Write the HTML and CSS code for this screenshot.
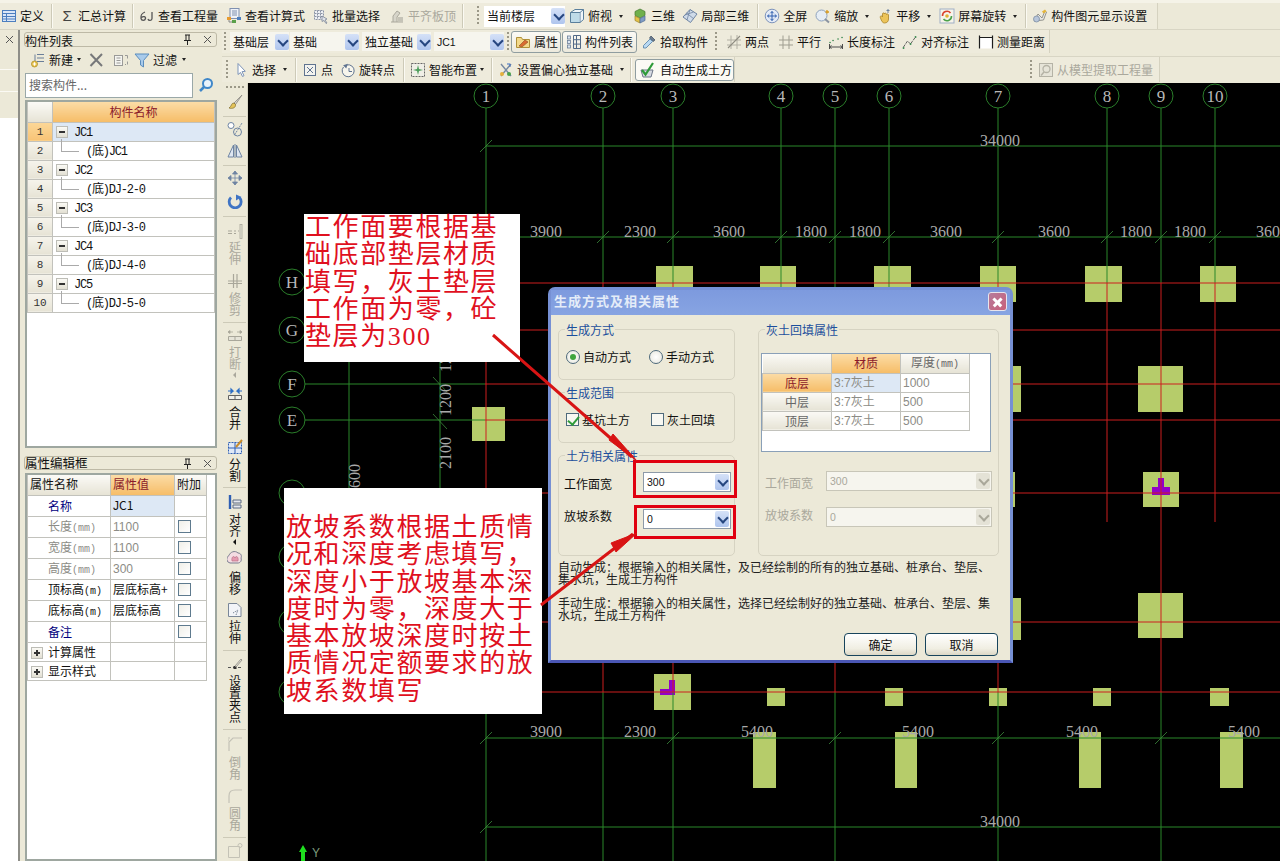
FILE: index.html
```html
<!DOCTYPE html>
<html lang="zh-CN">
<head>
<meta charset="utf-8">
<title>生成方式及相关属性</title>
<link rel="stylesheet" href="styles.css">
</head>
<body>
<svg class="defs" aria-hidden="true">
  <symbol id="i-table" viewBox="0 0 16 16"><rect x="1.5" y="2.5" width="13" height="11" fill="#dbe7f7" stroke="#4d7fbf"/><path d="M1.5 5.5h13M5.5 5.5v8M1.5 8.5h13M1.5 11h13" stroke="#4d7fbf" fill="none"/></symbol>
  <symbol id="i-six" viewBox="0 0 16 16"><path d="M6 4C3 5 1.500 8 2 10.500 2.500 13 6 13 6.500 10.500 7 8.500 4 8 2.500 9.500M13 4v6.500c0 2.500-3.500 2.500-4 .5" fill="none" stroke="#555" stroke-width="1.300"/></symbol>
  <symbol id="i-doc" viewBox="0 0 16 16"><rect x="4" y="0.500" width="9" height="10" fill="#eef1f7" stroke="#7f90b0"/><path d="M6 3h5M6 5h5M6 7h5" stroke="#7f90b0"/><rect x="1" y="9" width="4" height="3" fill="#e89b2f"/><rect x="6" y="12" width="4" height="3" fill="#5aa04a"/><rect x="11" y="9" width="4" height="3" fill="#4d7fbf"/><path d="M3 12v2h3" stroke="#888" fill="none"/></symbol>
  <symbol id="i-batch" viewBox="0 0 16 16"><path d="M1.500 2.500h9v9h-9zM4.500 2.500v9M7.500 2.500v9M1.500 5.500h9M1.500 8.500h9" fill="#eef0f4" stroke="#8a93a5" stroke-dasharray="2 1"/><path d="M9 8l5 3-2 1 2 3-1 .5-2-3-2 1z" fill="#dfe3ea" stroke="#707a8c" stroke-width=".7"/></symbol>
  <symbol id="i-flat" viewBox="0 0 16 16"><path d="M2 14h12M4 14V8l4-5 3 2-3 4v5" fill="#d7d5ca" stroke="#aaa89c"/><rect x="9" y="9" width="5" height="5" fill="#c5c3b7"/></symbol>
  <symbol id="i-cube" viewBox="0 0 16 16"><path d="M1.500 4.500 6 1.500h8.500v10L11 14.500H1.500z" fill="#f0f6fa" stroke="#5a7f9c"/><path d="M1.500 4.500H11v10M11 4.500l3.500-3" fill="none" stroke="#5a7f9c"/><path d="M2 5h8.500v9H2z" fill="#bfdbe8"/></symbol>
  <symbol id="i-3d" viewBox="0 0 16 16"><path d="M8 1l5 2.500v4L8 10 3 7.500v-4z" fill="#6fb04c" stroke="#44772f" stroke-width=".7"/><path d="M3 8l5 2.500V15l-5-2.500z" fill="#e4c24a" stroke="#9b8226" stroke-width=".7"/><path d="M13 8v4.500L8 15v-4.500z" fill="#7f9cc4" stroke="#4c6a94" stroke-width=".7"/></symbol>
  <symbol id="i-part3d" viewBox="0 0 16 16"><path d="M8 1.500 15 6l-6.500 8.500L1 9z" fill="#cfdbe9" stroke="#6e84a2"/><path d="M4.500 5 12 11M8 1.500 5 12M11.500 4 3 7" stroke="#6e84a2" stroke-width=".8" fill="none"/></symbol>
  <symbol id="i-full" viewBox="0 0 16 16"><circle cx="8" cy="8" r="6.800" fill="#e4ebf6" stroke="#7d93bb"/><path d="M8 3.500v9M3.500 8h9M8 3.500 6.500 5.200M8 3.500l1.500 1.700M8 12.500l-1.500-1.700M8 12.500l1.500-1.700M3.500 8l1.700-1.500M3.500 8l1.700 1.500M12.500 8l-1.700-1.500M12.500 8l-1.700 1.500" stroke="#2f5fae" fill="none"/></symbol>
  <symbol id="i-zoom" viewBox="0 0 16 16"><circle cx="6.500" cy="7.500" r="5.500" fill="#e6edf5" stroke="#8ea2bd"/><path d="M10 11l4 3.500" stroke="#8a93a0" stroke-width="2"/><path d="M12 2v3.500M10.500 4H14" stroke="#d89a1f" stroke-width="1.300"/></symbol>
  <symbol id="i-pan" viewBox="0 0 16 16"><path d="M3.500 10c-1-2 1-3 2-1V6c0-1.500 2-1.500 2 0 0-1.500 2-1 2 .5 0-1 2-.7 2 .5V11c0 2.500-1.500 4-4 4-2 0-3-2-4-5z" fill="#ecc45a" stroke="#a9842a" stroke-width=".8"/><path d="M11 1v4M9.500 2.500h3" stroke="#6e84a2"/></symbol>
  <symbol id="i-rot" viewBox="0 0 16 16"><rect x="1" y="1" width="14" height="14" fill="#f7f4ea" stroke="#9fb0c6"/><path d="M3.500 8a4.500 4.500 0 0 1 8-3" fill="none" stroke="#d9432e" stroke-width="1.600"/><path d="M12.500 8a4.500 4.500 0 0 1-8 3" fill="none" stroke="#4aa24a" stroke-width="1.600"/><circle cx="8" cy="8" r="1.800" fill="#e3b132"/></symbol>
  <symbol id="i-disp" viewBox="0 0 16 16"><path d="M2 13l4-7 4 4 3-7 1.500 1-3 8z" fill="#e8e8e4" stroke="#8a8a84" stroke-width=".9"/><circle cx="4.500" cy="11" r="3" fill="#b8c6da" stroke="#73859e" stroke-width=".7"/><path d="M10 3.500l3-2 1.500 2-3 2z" fill="#e5b63a"/></symbol>
  <symbol id="i-prop" viewBox="0 0 16 16"><path d="M1.500 3.500h5l1 2h7v8h-13z" fill="#f3d98a" stroke="#b09039"/><path d="M4 12l6-6 3 2-6 5z" fill="#d96b30" stroke="#8c4a26" stroke-width=".6"/></symbol>
  <symbol id="i-list" viewBox="0 0 16 16"><rect x="1.500" y="2" width="3" height="3" fill="#dbe5f1" stroke="#6b7f99" stroke-width=".8"/><rect x="1.500" y="6.500" width="3" height="3" fill="#dbe5f1" stroke="#6b7f99" stroke-width=".8"/><rect x="1.500" y="11" width="3" height="3" fill="#dbe5f1" stroke="#6b7f99" stroke-width=".8"/><path d="M7.500 1.500h7v13h-7zM7.500 5.700h7M7.500 10.100h7M10.500 1.500v13" fill="none" stroke="#536a88"/></symbol>
  <symbol id="i-pick" viewBox="0 0 16 16"><path d="M10 2l4 4-2 1.500L8.500 4z" fill="#6c7d92" stroke="#3c4a5c" stroke-width=".7"/><path d="M9 5l2.500 2.500L5 14H2.500v-2.500z" fill="#b9d9f2" stroke="#5f89ad" stroke-width=".9"/></symbol>
  <symbol id="i-two" viewBox="0 0 16 16"><path d="M5 1.500V15M11 1v14M1 6h14M1 11h14" stroke="#b2b0a4" fill="none"/><path d="M2 14 14 2" stroke="#8f8d82" stroke-width="1.100"/></symbol>
  <symbol id="i-par" viewBox="0 0 16 16"><path d="M5 1.500V15M11 1.500V15M1 6h14M1 11h14" stroke="#9f9d90" fill="none"/></symbol>
  <symbol id="i-len" viewBox="0 0 16 16"><path d="M1.500 15v-5M14.500 15v-5M1.500 13h13M1.500 13l2-1.500M1.500 13l2 1.500M14.500 13l-2-1.500M14.500 13l-2 1.500" stroke="#4c4c4c" fill="none"/><path d="M2 8.500h.1M5 6.500h.1M10 5h.1M14 3.500h.1" stroke="#3d8a52" stroke-width="1.600" stroke-linecap="round"/></symbol>
  <symbol id="i-align" viewBox="0 0 16 16"><path d="M1.500 13l4-6 3 3 5-7" stroke="#616161" fill="none" stroke-dasharray="3 1"/><path d="M1.500 14h.1M8.500 10h.1M13.500 3h.1" stroke="#3d8a52" stroke-width="1.800" stroke-linecap="round"/></symbol>
  <symbol id="i-meas" viewBox="0 0 16 16"><rect x="1.500" y="3.500" width="13" height="11" fill="#fff"/><path d="M1.500 1.500v13M14.500 1.500v13M1.500 3.500h13" stroke="#1d1d1d" fill="none" stroke-width="1.200"/></symbol>
  <symbol id="i-sel" viewBox="0 0 16 16"><path d="M5 1.500v11l2.500-2 2 4 1.500-.8-2-4 3.300-.4z" fill="#fff" stroke="#7d94b8"/></symbol>
  <symbol id="i-dot" viewBox="0 0 16 16"><rect x="2.500" y="2.500" width="11" height="11" fill="#f3f3ef" stroke="#5f7390"/><path d="M5 5l6 6M11 5l-6 6" stroke="#5f7390"/></symbol>
  <symbol id="i-rotpt" viewBox="0 0 16 16"><path d="M3.500 5a6 6 0 1 0 3-2" fill="#f7f5ec" stroke="#5f7390"/><path d="M7 1v5L3 4z" fill="#5f7390" transform="rotate(20 5 4)"/><path d="M9 6v3.500h3" stroke="#5f7390" fill="none"/></symbol>
  <symbol id="i-smart" viewBox="0 0 16 16"><rect x="1.500" y="1.500" width="13" height="13" fill="#f0efe7" stroke="#666" stroke-dasharray="2 1"/><path d="M8 3l1 4 4 1-4 1-1 4-1-4-4-1 4-1z" fill="#4e9e5c"/></symbol>
  <symbol id="i-ecc" viewBox="0 0 16 16"><path d="M3 2l10 12M13 2 3 14" stroke="#7689a3" stroke-width="1.400"/><circle cx="4" cy="12" r="2" fill="#e6b13b"/><circle cx="11" cy="12" r="2" fill="#4aa24a"/><path d="M9 2h3v3" stroke="#3f6fbf" fill="none"/></symbol>
  <symbol id="i-auto" viewBox="0 0 16 16"><path d="M2 8h12l-2 7H4z" fill="#d7dbe3" stroke="#6c7688"/><path d="M3 8l3.500 4.500L14 1" fill="none" stroke="#2f9b3a" stroke-width="2.200"/></symbol>
  <symbol id="i-fromm" viewBox="0 0 16 16"><rect x="1.500" y="1.500" width="13" height="13" fill="#e6e4d8" stroke="#b5b3a6"/><circle cx="8.500" cy="7" r="3.500" fill="none" stroke="#b5b3a6" stroke-width="1.300"/><path d="M6 10l-3 3.500" stroke="#b5b3a6" stroke-width="1.500"/></symbol>
  <symbol id="i-new" viewBox="0 0 16 16"><path d="M7 2.500h7M7 6h7M7 9.500h7" stroke="#6a7e99"/><path d="M5 2.500v7" stroke="#6a7e99"/><circle cx="4.500" cy="12" r="3" fill="#e9c54e" stroke="#b08f2a" stroke-width=".8"/><path d="M2.800 12h3.400M4.500 10.300v3.400" stroke="#fff"/></symbol>
  <symbol id="i-x" viewBox="0 0 16 16"><path d="M2.500 2 14 14M14 2 2.500 14" stroke="#77787a" stroke-width="2"/></symbol>
  <symbol id="i-copy" viewBox="0 0 16 16"><rect x="1.500" y="3.500" width="8" height="10" fill="#f4f4f0" stroke="#9a9a98"/><path d="M3.500 6h4M3.500 8.500h4M3.500 11h4" stroke="#9a9a98"/><path d="M12 3.500h2.500v3M14.500 9.500v3M12 12.500h1" stroke="#9a9a98" fill="none"/></symbol>
  <symbol id="i-filter" viewBox="0 0 16 16"><path d="M1 2h14L9.500 8.500V15l-3-2V8.500z" fill="#a9cbeb" stroke="#5b8dbd"/></symbol>
  <symbol id="i-search" viewBox="0 0 16 16"><circle cx="9.500" cy="6.500" r="4.500" fill="#eaf3fb" stroke="#3f87c9" stroke-width="2"/><path d="M6 10l-4 4" stroke="#3f87c9" stroke-width="2.500"/></symbol>
  <symbol id="i-pin" viewBox="0 0 9 11"><path d="M2 1h5M3 1v5M6 1v5M1 6.500h7M4.500 7v4" stroke="#222" fill="none"/></symbol>
  <symbol id="i-close" viewBox="0 0 9 9"><path d="M1 1l7 7M8 1 1 8" stroke="#555" fill="none"/></symbol>
  <symbol id="i-brush" viewBox="0 0 16 16"><path d="M15 1 7 9l1.500 1.500z" fill="#d5d3cc" stroke="#8a8882" stroke-width=".8"/><path d="M7 9c-3 0-2 3-5 5 3 1 7 0 6.500-3.500z" fill="#e3c35a" stroke="#7c6a2a" stroke-width=".7"/></symbol>
  <symbol id="i-circ" viewBox="0 0 16 16"><circle cx="4" cy="4.500" r="3" fill="#fff" stroke="#6e84a2"/><circle cx="10.500" cy="11" r="4" fill="none" stroke="#6e84a2"/><path d="M7.500 14 15 2" stroke="#6e84a2" stroke-dasharray="2 1"/></symbol>
  <symbol id="i-mirror" viewBox="0 0 16 16"><path d="M1 14 6.500 2v12zM15 14 9.500 2v12z" fill="#dee6f1" stroke="#6e84a2"/><path d="M8 1v14" stroke="#6e84a2"/></symbol>
  <symbol id="i-move" viewBox="0 0 16 16"><path d="M8 1v14M1 8h14M8 1 5.500 4h5zM8 15l-2.500-3h5zM1 8l3-2.500v5zM15 8l-3-2.500v5z" fill="#6e84a2" stroke="#6e84a2" stroke-width=".8"/></symbol>
  <symbol id="i-rotate" viewBox="0 0 16 16"><path d="M4 4.500a6 6 0 1 0 8.300 0" fill="none" stroke="#3f74c4" stroke-width="2.800"/><path d="M9 1.500v6L14.500 4z" fill="#3f74c4"/></symbol>
  <symbol id="i-ext" viewBox="0 0 16 16"><path d="M1 8h4M7 8h2M11 8h1M1 10.500h4M7 10.500h2" stroke="#a9a79a"/><rect x="13" y="1.500" width="2" height="14" fill="#e6e4d8" stroke="#a9a79a" stroke-width=".8"/></symbol>
  <symbol id="i-trim" viewBox="0 0 16 16"><path d="M1 8h14M1 10.500h14" stroke="#a9a79a"/><path d="M6.500 1v14M10 1v14" stroke="#a9a79a" stroke-width="1.200"/></symbol>
  <symbol id="i-break" viewBox="0 0 16 16"><path d="M1 5h5M10 5h5M1 5l2-1.500v3zM15 5l-2-1.500v3z" stroke="#a9a79a" fill="#a9a79a" stroke-width=".8"/><path d="M1.500 9.500h13v4h-13zM8 9.500v4" stroke="#a9a79a" fill="#e6e4d8"/></symbol>
  <symbol id="i-merge" viewBox="0 0 16 16"><path d="M1 5h5L4 3v4l2-2M15 5h-5l2-2v4l-2-2" stroke="#2f6fc4" fill="none" stroke-width="1.200"/><path d="M1.500 9.500h13v4h-13zM8 9.500v4" stroke="#626262" fill="#f2f1ea"/></symbol>
  <symbol id="i-split" viewBox="0 0 16 16"><path d="M1.500 3.500h13v11h-13z" fill="#dfe8f6" stroke="#2f5fb4" stroke-dasharray="2 1"/><path d="M1.500 9h13M8 3.500v11" stroke="#2f5fb4"/><path d="M15 1 9 8" stroke="#c98c2b" stroke-width="2"/></symbol>
  <symbol id="i-aln" viewBox="0 0 16 16"><path d="M3 1v14" stroke="#2f5fb4" stroke-width="2.400"/><path d="M6 6h8v3H6zM6 11h8v3H6z" fill="#e6e8ee" stroke="#5c6b82"/></symbol>
  <symbol id="i-off" viewBox="0 0 16 16"><path d="M3 13a4 4 0 0 1-1-7.500C3 2 8 0 11 3c3 0 4 3 3 5 1 3-1 5-3 5z" fill="#f4dce2" stroke="#7a7f8f"/><path d="M5 11c-1-4 2-6 3-3 1-3 4-1 3 3z" fill="#e59ab0" stroke="#b46a80" stroke-width=".6"/></symbol>
  <symbol id="i-stretch" viewBox="0 0 16 16"><path d="M1.500 1.500H10l4 4v9H1.500z" fill="#f2f4f8" stroke="#7a8798"/><path d="M6 11l5-3M9 13l2-5" stroke="#7a8798" stroke-dasharray="1.500 1"/></symbol>
  <symbol id="i-grips" viewBox="0 0 16 16"><path d="M1 9.500h14" stroke="#555" stroke-dasharray="3 2"/><rect x="6.500" y="8" width="3" height="3" fill="#333"/><path d="M8 8l6-7 1 1-6 7" fill="#e6e4d8" stroke="#8a8882" stroke-width=".8"/></symbol>
  <symbol id="i-cham" viewBox="0 0 16 16"><path d="M2 15V6l4-4h9" fill="none" stroke="#c4c2b6" stroke-width="1.200"/><path d="M1 2h2M1 4h1" stroke="#c4c2b6"/></symbol>
  <symbol id="i-round" viewBox="0 0 16 16"><path d="M2 15V8c0-4 2-6 6-6h7" fill="none" stroke="#c4c2b6" stroke-width="1.200"/></symbol>
  <symbol id="i-last" viewBox="0 0 16 16"><path d="M1.500 3.500h11v11h-11z" fill="none" stroke="#c4c2b6"/><circle cx="13" cy="2.500" r="2" fill="none" stroke="#c4c2b6"/></symbol>
</svg>

<div class="app">
  <header class="tb tb-main">
    <div class="band band-main">
      <span class="ti m1"><svg class="ic"><use href="#i-table"/></svg>定义</span>
      <span class="sep m7"></span>
      <span class="ti m6"><span class="ic sigma">Σ</span>汇总计算</span>
      <span class="sep m6"></span>
      <span class="ti m5"><svg class="ic"><use href="#i-six"/></svg>查看工程量</span>
      <span class="ti m8"><svg class="ic"><use href="#i-doc"/></svg>查看计算式</span>
      <span class="ti m8"><svg class="ic"><use href="#i-batch"/></svg>批量选择</span>
      <span class="ti m9 off"><svg class="ic"><use href="#i-flat"/></svg>平齐板顶</span>
      <span class="sep m6"></span>
      <span class="grip m13"></span>
      <span class="combo plain m5 w81"><span class="combo-text">当前楼层</span><span class="arrow"></span></span>
      <span class="ti m4"><svg class="ic"><use href="#i-cube"/></svg>俯视</span><span class="caret m7"></span>
      <span class="ti m9"><svg class="ic"><use href="#i-3d"/></svg>三维</span>
      <span class="ti m7"><svg class="ic"><use href="#i-part3d"/></svg>局部三维</span>
      <span class="sep m8"></span>
      <span class="ti m5"><svg class="ic"><use href="#i-full"/></svg>全屏</span>
      <span class="ti m8"><svg class="ic"><use href="#i-zoom"/></svg>缩放</span><span class="caret m7"></span>
      <span class="ti m8"><svg class="ic"><use href="#i-pan"/></svg>平移</span><span class="caret m7"></span>
      <span class="ti m8"><svg class="ic"><use href="#i-rot"/></svg>屏幕旋转</span><span class="caret m7"></span>
      <span class="sep m8"></span>
      <span class="ti m5"><svg class="ic"><use href="#i-disp"/></svg>构件图元显示设置</span>
    </div>
  </header>

  <div class="main">
    <aside class="stub">
      <div class="stub-tab"><svg class="mini"><use href="#i-close"/></svg></div>
      <div class="stub-top"></div>
      <div class="stub-body"></div>
    </aside>

    <aside class="panels">
      <div class="panel-head"><span class="panel-title">构件列表</span><svg class="mini pin"><use href="#i-pin"/></svg><svg class="mini"><use href="#i-close"/></svg></div>
      <div class="panel-tools">
        <span class="ti"><svg class="ic"><use href="#i-new"/></svg>新建</span><span class="caret m4"></span>
        <svg class="ic m7"><use href="#i-x"/></svg>
        <svg class="ic m9"><use href="#i-copy"/></svg>
        <span class="ti m5"><svg class="ic"><use href="#i-filter"/></svg>过滤</span><span class="caret m5"></span>
      </div>
      <div class="search">
        <span class="search-input">搜索构件...</span>
        <svg class="ic search-ic"><use href="#i-search"/></svg>
      </div>
      <div class="gridbox list-box">
        <table class="grid list">
          <colgroup><col class="c-num"><col class="c-name"></colgroup>
          <thead><tr><th class="th-plain"></th><th class="th-hot">构件名称</th></tr></thead>
          <tbody>
            <tr class="row-on"><td class="num hot">1</td><td class="parent"><i class="box minus"></i>JC1</td></tr>
            <tr><td class="num">2</td><td class="child">(底)JC1</td></tr>
            <tr><td class="num">3</td><td class="parent"><i class="box minus"></i>JC2</td></tr>
            <tr><td class="num">4</td><td class="child">(底)DJ-2-0</td></tr>
            <tr><td class="num">5</td><td class="parent"><i class="box minus"></i>JC3</td></tr>
            <tr><td class="num">6</td><td class="child">(底)DJ-3-0</td></tr>
            <tr><td class="num">7</td><td class="parent"><i class="box minus"></i>JC4</td></tr>
            <tr><td class="num">8</td><td class="child">(底)DJ-4-0</td></tr>
            <tr><td class="num">9</td><td class="parent"><i class="box minus"></i>JC5</td></tr>
            <tr><td class="num">10</td><td class="child">(底)DJ-5-0</td></tr>
          </tbody>
        </table>
      </div>
      <div class="panel-head head2"><span class="panel-title big">属性编辑框</span><svg class="mini pin"><use href="#i-pin"/></svg><svg class="mini"><use href="#i-close"/></svg></div>
      <div class="gridbox prop-box">
        <table class="grid prop">
          <colgroup><col class="p1"><col class="p2"><col class="p3"></colgroup>
          <thead><tr><th class="th-plain left">属性名称</th><th class="th-hot left">属性值</th><th class="th-plain left">附加</th></tr></thead>
          <tbody>
            <tr><td class="name blue">名称</td><td class="val on">JC1</td><td></td></tr>
            <tr><td class="name grey">长度<span class="u">(mm)</span></td><td class="val grey">1100</td><td><i class="chk"></i></td></tr>
            <tr><td class="name grey">宽度<span class="u">(mm)</span></td><td class="val grey">1100</td><td><i class="chk"></i></td></tr>
            <tr><td class="name grey">高度<span class="u">(mm)</span></td><td class="val grey">300</td><td><i class="chk"></i></td></tr>
            <tr><td class="name">顶标高<span class="u">(m)</span></td><td class="val">层底标高+</td><td><i class="chk"></i></td></tr>
            <tr><td class="name">底标高<span class="u">(m)</span></td><td class="val">层底标高</td><td><i class="chk"></i></td></tr>
            <tr><td class="name blue">备注</td><td></td><td><i class="chk"></i></td></tr>
            <tr class="short"><td class="group-row"><i class="box plus"></i>计算属性</td><td></td><td></td></tr>
            <tr class="short"><td class="group-row"><i class="box plus"></i>显示样式</td><td></td><td></td></tr>
          </tbody>
        </table>
      </div>
    </aside>

    <div class="work">
      <div class="tb tb-2">
        <div class="band band-2">
          <span class="grip"></span>
          <span class="combo plain m4 w59"><span class="combo-text">基础层</span><span class="arrow"></span></span>
          <span class="combo plain m1 w69"><span class="combo-text">基础</span><span class="arrow"></span></span>
          <span class="combo plain m3 w69"><span class="combo-text">独立基础</span><span class="arrow"></span></span>
          <span class="combo plain m3 w70"><span class="combo-text latin">JC1</span><span class="arrow"></span></span>
          <span class="grip m3"></span>
          <span class="ti btn btn-prop m2"><svg class="ic"><use href="#i-prop"/></svg>属性</span>
          <span class="ti btn m1"><svg class="ic"><use href="#i-list"/></svg>构件列表</span>
          <span class="ti m4"><svg class="ic"><use href="#i-pick"/></svg>拾取构件</span>
          <span class="grip m7"></span>
          <span class="ti m9"><svg class="ic"><use href="#i-two"/></svg>两点</span>
          <span class="ti m9"><svg class="ic"><use href="#i-par"/></svg>平行</span>
          <span class="ti m7"><svg class="ic"><use href="#i-len"/></svg>长度标注</span>
          <span class="ti m7"><svg class="ic"><use href="#i-align"/></svg>对齐标注</span>
          <span class="ti m9"><svg class="ic"><use href="#i-meas"/></svg>测量距离</span>
        </div>
      </div>
      <div class="tb tb-3">
        <div class="band band-3">
          <span class="grip m4"></span>
          <span class="ti m5"><svg class="ic"><use href="#i-sel"/></svg>选择</span><span class="caret m7"></span>
          <span class="sep m8"></span>
          <span class="ti m5"><svg class="ic"><use href="#i-dot"/></svg>点</span>
          <span class="ti m7"><svg class="ic"><use href="#i-rotpt"/></svg>旋转点</span>
          <span class="sep m8"></span>
          <span class="ti m5"><svg class="ic"><use href="#i-smart"/></svg>智能布置</span><span class="caret m3"></span>
          <span class="sep m7"></span>
          <span class="ti m5"><svg class="ic"><use href="#i-ecc"/></svg>设置偏心独立基础</span><span class="caret m7"></span>
          <span class="sep m6"></span>
          <span class="ti btn btn-auto m3"><svg class="ic"><use href="#i-auto"/></svg>自动生成土方</span>
        </div>
        <div class="band band-r">
          <span class="grip"></span>
          <span class="ti off m6"><svg class="ic"><use href="#i-fromm"/></svg>从模型提取工程量</span>
        </div>
      </div>

      <div class="stage">
        <nav class="vtools">
          <span class="vgrip"></span>
          <svg class="ic mt6"><use href="#i-brush"/></svg>
          <span class="hr mt6"></span>
          <svg class="ic mt4"><use href="#i-circ"/></svg>
          <svg class="ic mt6"><use href="#i-mirror"/></svg>
          <span class="hr mt6"></span>
          <svg class="ic mt4"><use href="#i-move"/></svg>
          <svg class="ic mt7"><use href="#i-rotate"/></svg>
          <span class="hr mt7"></span>
          <svg class="ic mt6"><use href="#i-ext"/></svg><span class="vt off mt2">延伸</span>
          <svg class="ic mt8"><use href="#i-trim"/></svg><span class="vt off mt3">修剪</span>
          <span class="hr mt6"></span>
          <svg class="ic mt4"><use href="#i-break"/></svg><span class="vt off mt3">打断</span><span class="vtri off"></span>
          <svg class="ic mt8"><use href="#i-merge"/></svg><span class="vt mt4">合并</span>
          <svg class="ic mt9"><use href="#i-split"/></svg><span class="vt mt3">分割</span>
          <span class="hr mt5"></span>
          <svg class="ic mt6"><use href="#i-aln"/></svg><span class="vt mt3">对齐</span><span class="vtri"></span>
          <svg class="ic mt5"><use href="#i-off"/></svg><span class="vt mt5">偏移</span>
          <svg class="ic mt7"><use href="#i-stretch"/></svg><span class="vt mt2">拉伸</span>
          <span class="hr mt6"></span>
          <svg class="ic mt7"><use href="#i-grips"/></svg><span class="vt mt1">设置夹点</span>
          <span class="hr mt6"></span>
          <svg class="ic mt6"><use href="#i-cham"/></svg><span class="vt off mt4">倒角</span>
          <svg class="ic mt8"><use href="#i-round"/></svg><span class="vt off mt3">圆角</span>
          <span class="hr mt6"></span>
          <svg class="ic mt5"><use href="#i-last"/></svg>
        </nav>

        <svg class="cad" viewBox="248 83 1032 778" width="1032" height="778">
          <g class="bl">
            <rect x="656" y="266" width="37" height="36"/><rect x="760" y="266" width="36" height="36"/>
            <rect x="874" y="266" width="37" height="36"/><rect x="980" y="266" width="36" height="36"/>
            <rect x="1085" y="266" width="37" height="36"/><rect x="1200" y="266" width="36" height="36"/>
            <rect x="472" y="407" width="33" height="34"/>
            <rect x="985" y="366" width="36" height="46"/><rect x="1138" y="366" width="45" height="46"/>
            <rect x="985" y="472" width="30" height="35"/><rect x="1143" y="472" width="36" height="35"/>
            <rect x="985" y="598" width="36" height="42"/><rect x="1138" y="593" width="45" height="45"/>
            <rect x="654" y="674" width="37" height="36"/>
            <rect x="767" y="688" width="18" height="18"/><rect x="885" y="688" width="18" height="18"/>
            <rect x="989" y="688" width="18" height="18"/><rect x="1093" y="688" width="18" height="18"/>
            <rect x="1210" y="688" width="19" height="18"/>
            <rect x="753" y="732" width="23" height="56"/><rect x="895" y="732" width="22" height="56"/>
            <rect x="1079" y="732" width="22" height="56"/><rect x="1220" y="732" width="23" height="56"/>
          </g>
          <path class="pu" d="M660 689h9v-9h6v15h-15zM1158 478h6v9h6v8h-18v-8h6z"/>
          <path class="gl" d="M486 108V283M603 108V283M673 108V283M781 108V287M835 108V287M889 108V287M998 108V283M1107 108V283M1161 108V283M1215 108V283M486 692V861M603 692V861M673 692V861M835 692V861M998 692V861M1161 692V861M486 146H1280M486 237H1280M486 738H1280M486 827H1280M304 384H485M304 420H485M349 362V488M440 362V488"/>
          <path class="tk" d="M480 152l12-12M480 243l12-12M597 243l12-12M667 243l12-12M775 243l12-12M829 243l12-12M883 243l12-12M992 243l12-12M1101 243l12-12M1155 243l12-12M1209 243l12-12M480 744l12-12M667 744l12-12M829 744l12-12M992 744l12-12M1155 744l12-12M480 833l12-12M433 377l14 15M433 414l14 15"/>
          <path class="rl" d="M486 283V692M603 283V692M673 283V692M835 287V692M998 283V692M1161 283V692M1107 283V522M1215 283V522M485 283H1280M485 330H1280M485 384H1280M485 420H1280M485 493H1280M485 622H1280M485 692H1280"/>
          <g class="ax">
            <circle cx="486" cy="96" r="12"/><circle cx="603" cy="96" r="12"/><circle cx="673" cy="96" r="12"/><circle cx="781" cy="96" r="12"/><circle cx="835" cy="96" r="12"/><circle cx="889" cy="96" r="12"/><circle cx="998" cy="96" r="12"/><circle cx="1107" cy="96" r="12"/><circle cx="1161" cy="96" r="12"/><circle cx="1215" cy="96" r="12"/>
            <circle cx="292" cy="282" r="13"/><circle cx="292" cy="330" r="13"/><circle cx="292" cy="384" r="13"/><circle cx="292" cy="420" r="13"/><circle cx="292" cy="493" r="13"/><circle cx="292" cy="557" r="13"/><circle cx="292" cy="622" r="13"/><circle cx="292" cy="692" r="13"/>
          </g>
          <g class="lb">
            <text x="486" y="102">1</text><text x="603" y="102">2</text><text x="673" y="102">3</text><text x="781" y="102">4</text><text x="835" y="102">5</text><text x="889" y="102">6</text><text x="998" y="102">7</text><text x="1107" y="102">8</text><text x="1161" y="102">9</text><text x="1215" y="102">10</text>
            <text x="292" y="288">H</text><text x="292" y="336">G</text><text x="292" y="390">F</text><text x="292" y="426">E</text>
          </g>
          <g class="dm">
            <text x="1000" y="146">34000</text><text x="1000" y="827">34000</text>
            <text x="546" y="237">3900</text><text x="640" y="237">2300</text><text x="729" y="237">3600</text><text x="811" y="237">1800</text><text x="865" y="237">1800</text><text x="946" y="237">3600</text><text x="1054" y="237">3600</text><text x="1136" y="237">1800</text><text x="1190" y="237">1800</text><text x="1272" y="237">3600</text>
            <text x="546" y="737">3900</text><text x="640" y="737">2300</text><text x="757" y="737">5400</text><text x="918" y="737">5400</text><text x="1082" y="737">5400</text><text x="1244" y="737">5400</text>
            <text transform="translate(451,400) rotate(-90)">1200</text>
            <text transform="translate(451,453) rotate(-90)">2100</text>
            <text transform="translate(451,356) rotate(-90)">1200</text>
            <text transform="translate(360,480) rotate(-90)">3600</text>
          </g>
          <path class="ya" d="M303 845l4 7h-2v9h-4v-9h-2z"/>
          <text class="yl" x="312" y="857">Y</text>
        </svg>
      </div>
    </div>
  </div>

  <section class="dialog">
    <div class="dlg-title"><span class="dlg-name">生成方式及相关属性</span><span class="dlg-close"></span></div>
    <div class="dlg-body">
      <div class="dlg-cols">
        <div class="dlg-left">
          <div class="group g1">
            <span class="legend">生成方式</span>
            <div class="opts">
              <label class="opt w84"><i class="radio on"></i>自动方式</label>
              <label class="opt"><i class="radio"></i>手动方式</label>
            </div>
          </div>
          <div class="group g2">
            <span class="legend">生成范围</span>
            <div class="opts">
              <label class="opt w85"><i class="cbx on"></i>基坑土方</label>
              <label class="opt"><i class="cbx"></i>灰土回填</label>
            </div>
          </div>
          <div class="group g3">
            <span class="legend">土方相关属性</span>
            <div class="field f1"><span class="f-label">工作面宽</span><span class="combo boxed w88"><span class="combo-text latin">300</span><span class="arrow"></span></span></div>
            <div class="field f2"><span class="f-label">放坡系数</span><span class="combo boxed w88"><span class="combo-text latin">0</span><span class="arrow"></span></span></div>
          </div>
        </div>
        <div class="group gr">
          <span class="legend">灰土回填属性</span>
          <div class="mat-box">
            <table class="grid mat">
              <colgroup><col><col><col></colgroup>
              <thead><tr><th class="th-plain"></th><th class="th-hot">材质</th><th class="th-plain muted">厚度<span class="u">(mm)</span></th></tr></thead>
              <tbody>
                <tr><th class="th-hot">底层</th><td class="val grey on">3:7灰土</td><td class="val grey">1000</td></tr>
                <tr><th class="th-plain muted">中层</th><td class="val grey">3:7灰土</td><td class="val grey">500</td></tr>
                <tr><th class="th-plain muted">顶层</th><td class="val grey">3:7灰土</td><td class="val grey">500</td></tr>
              </tbody>
            </table>
          </div>
          <div class="field f3"><span class="f-label off">工作面宽</span><span class="combo boxed dis w166"><span class="combo-text latin">300</span><span class="arrow"></span></span></div>
          <div class="field f4"><span class="f-label off">放坡系数</span><span class="combo boxed dis w166"><span class="combo-text latin">0</span><span class="arrow"></span></span></div>
        </div>
      </div>
      <p class="note">自动生成：根据输入的相关属性，及已经绘制的所有的独立基础、桩承台、垫层、<br>集水坑，生成土方构件</p>
      <p class="note n2">手动生成：根据输入的相关属性，选择已经绘制好的独立基础、桩承台、垫层、集<br>水坑，生成土方构件</p>
      <div class="dlg-btns"><button class="pbtn" type="button">确定</button><button class="pbtn" type="button">取消</button></div>
    </div>
  </section>

  <div class="callout c1">工作面要根据基<br>础底部垫层材质<br>填写，灰土垫层<br>工作面为零，砼<br>垫层为300</div>
  <div class="callout c2">放坡系数根据土质情<br>况和深度考虑填写，<br>深度小于放坡基本深<br>度时为零，深度大于<br>基本放坡深度时按土<br>质情况定额要求的放<br>坡系数填写</div>
  <div class="redbox r1"></div>
  <div class="redbox r2"></div>
  <svg class="arrows" viewBox="0 0 1280 861" width="1280" height="861">
    <path d="M493 335 632 457M541 605l92-71"/>
    <path class="head" d="M637 461 613 434l-4 6zM637 533l-26 10 5 9z"/>
  </svg>
</div>
</body>
</html>
```
FILE: styles.css
```css
* { box-sizing: border-box; }
html, body { margin: 0; padding: 0; }
body { width: 1280px; height: 861px; overflow: hidden; background: #ece9d8; color: #111; font: 12px/1 "Noto Sans CJK SC", "Liberation Sans", sans-serif; }
.defs { position: absolute; width: 0; height: 0; }
.app { position: relative; width: 1280px; height: 861px; overflow: hidden; display: flex; flex-direction: column; }

.tb { display: flex; background: #ece9d8; flex: none; }
.tb-main { height: 30px; padding-top: 3px; border-bottom: 1px solid #d8d5c4; background: linear-gradient(#f5f3e8 3px, #ece9d8 3px); }
.tb-2 { height: 27px; padding-bottom: 3px; border-bottom: 1px solid #d8d5c4; }
.tb-3 { height: 26px; justify-content: space-between; }
.band { display: flex; align-items: center; height: 25px; background: #eeebdc; border-right: 1px solid #d5d2c0; white-space: nowrap; }
.band-main { width: 1158px; height: 26px; }
.band-2 { padding-left: 2px; width: 828px; height: 23px; }
.band-r { width: 130px; margin-right: 120px; }

.ic { display: block; width: 16px; height: 16px; flex: none; }
.ti { display: inline-flex; align-items: center; gap: 3px; }
.off { color: #aaa89c; }
.sep { flex: none; width: 2px; height: 24px; border-left: 1px solid #cdcab8; border-right: 1px solid #fbfaf3; }
.grip { flex: none; width: 2px; height: 20px; background: repeating-linear-gradient(#9b9888 0 2px, transparent 2px 4px); }
.caret { flex: none; width: 0; height: 0; border: 2.5px solid transparent; border-top: 3px solid #222; border-bottom: 0; }
.sigma { font: 15px/16px "Liberation Sans", sans-serif; color: #444; text-align: center; }

.m1 { margin-left: 1px; } .m2 { margin-left: 2px; } .m3 { margin-left: 3px; } .m4 { margin-left: 4px; } .m5 { margin-left: 5px; }
.m6 { margin-left: 6px; } .m7 { margin-left: 7px; } .m8 { margin-left: 8px; } .m9 { margin-left: 9px; } .m13 { margin-left: 13px; }
.mt1 { margin-top: 1px; } .mt2 { margin-top: 2px; } .mt3 { margin-top: 3px; } .mt4 { margin-top: 4px; } .mt5 { margin-top: 5px; }
.mt6 { margin-top: 6px; } .mt7 { margin-top: 7px; } .mt8 { margin-top: 8px; } .mt9 { margin-top: 9px; }

.combo { display: inline-flex; align-items: center; justify-content: space-between; flex: none; height: 20px; background: #fff; padding-left: 3px; }
.combo.plain { background: #f6f5ee; height: 19px; }
.combo.plain.m5 { background: #fff; height: 21px; }
.combo.boxed { border: 1px solid #8d9aa8; padding-right: 1px; }
.combo-text { white-space: nowrap; }
.latin { font: 10.500px "Liberation Sans", sans-serif; }
.w59 { width: 59px; } .w69 { width: 69px; } .w70 { width: 70px; } .w81 { width: 81px; } .w88 { width: 88px; } .w166 { width: 166px; }
.arrow { position: relative; flex: none; width: 14px; height: 16px; background: linear-gradient(#d5e1f7, #afc5ee); border-radius: 2px; }
.arrow::after { content: ""; position: absolute; left: 4px; top: 3px; width: 6px; height: 6px; border-right: 2px solid #26467f; border-bottom: 2px solid #26467f; transform: rotate(45deg); }
.btn { height: 22px; padding: 0 3px; background: linear-gradient(#fbfaf5, #ece9dc); border: 1px solid #8f9da0; border-radius: 3px; }
.btn-auto { width: 99px; gap: 5px; background: #fbfaf4; }
.btn-prop { width: 50px; }

.main { flex: 1; min-height: 0; display: flex; }
.stub { width: 20px; flex: none; display: flex; flex-direction: column; border-right: 2px solid #8e8e88; background: #fff; }
.stub-tab { height: 18px; display: flex; justify-content: center; align-items: center; background: #ece9d8; }
.stub-top { height: 70px; background: linear-gradient(#ece9d8 21px, #fbfaf4 21px, #fbfaf4 22px, #ece9d8 22px, #ece9d8 43px, #fbfaf4 43px, #fbfaf4 44px, #ece9d8 44px); }
.stub-body { flex: 1; }
.mini { display: block; width: 9px; height: 9px; flex: none; }
.pin { height: 11px; margin-right: 11px; }

.panels { width: 202px; flex: none; padding: 2px 5px 0 4px; display: flex; flex-direction: column; }
.panel-head { display: flex; align-items: center; justify-content: flex-end; height: 15px; padding-right: 4px; border: 1px solid #bdb9a6; border-radius: 3px; }
.panel-title { margin-right: auto; padding-top: 2px; }
.panel-title.big { font-size: 12.500px; padding-top: 1px; }
.head2 { margin-top: 8px; height: 14px; }
.panel-tools { display: flex; align-items: center; height: 25px; padding-left: 6px; }
.search { display: flex; align-items: center; height: 26px; }
.search-input { display: flex; align-items: center; height: 25px; width: 168px; margin-left: 1px; padding-left: 3px; background: #fff; border: 1px solid #9aa8a8; color: #666; }
.search-ic { margin-left: 5px; }
.gridbox { background: #fff; border: 2px solid #9ea7a0; margin-left: 1px; width: 192px; }
.list-box { height: 348px; margin-top: 2px; }
.prop-box { flex: 1; margin-top: 3px; }

.grid { border-collapse: collapse; table-layout: fixed; background: #fff; }
.grid th, .grid td { padding: 0; border: 1px solid #c2c2bc; font-weight: 400; white-space: nowrap; }
.th-plain { background: linear-gradient(#fbfaf6, #e6e3d5); }
.th-hot { background: linear-gradient(#fbdca6, #f6bd68); color: #8b1a2a; }
.muted { color: #666; }
.left { text-align: left; padding-left: 2px !important; }
.u { font: 10px "Liberation Mono", monospace; }

.list { width: 187px; }
.c-num { width: 25px; } .c-name { width: 162px; }
.list thead th { height: 20px; border-top: 0; }
.list tbody tr { height: 19px; }
.list td { padding-top: 2px; font: 12px "Liberation Mono", "Noto Sans CJK SC", monospace; letter-spacing: -1.200px; line-height: 14px; }
.num { padding-top: 0 !important; text-align: center; background: linear-gradient(#f6f4ec, #e6e3d5); letter-spacing: 0 !important; font-size: 11px !important; color: #333; }
.num.hot { background: linear-gradient(#fbd798, #f8c476); }
.row-on td:not(.num) { background: #dde8f5; }
.parent { padding-left: 3px !important; }
.child { position: relative; padding-left: 33px !important; }
.child::before { content: ""; position: absolute; left: 8px; top: -3px; width: 17px; height: 12px; border-left: 1px solid #aaa; border-bottom: 1px solid #aaa; }
.box { position: relative; display: inline-block; width: 12px; height: 12px; vertical-align: -2px; margin-right: 6px; border: 1px solid #bdbdb6; background: linear-gradient(#fbfaf5, #e2dfd2); }
.box::before { content: ""; position: absolute; left: 2px; right: 2px; top: 4px; height: 2px; background: #333; }
.plus::after { content: ""; position: absolute; top: 2px; bottom: 2px; left: 4px; width: 2px; background: #333; }

.prop { width: 179px; }
.p1 { width: 83px; } .p2 { width: 64px; } .p3 { width: 32px; }
.prop thead th { height: 20px; border-top: 0; padding-bottom: 2px; }
.prop tbody tr { height: 21px; }
.prop tbody tr.short { height: 19px; }
.name { padding-left: 20px !important; }
.blue { color: #000080; }
.grey { color: #8c8c86; }
.val { padding-left: 2px !important; font-size: 12px; }
.val.grey, td.val:first-letter { font-family: "Liberation Sans", "Noto Sans CJK SC", sans-serif; }
.val.on { background: #dde8f5; }
.group-row { padding-left: 3px !important; padding-top: 2px !important; }
.group-row .box { margin-right: 5px; }
.chk { display: block; width: 13px; height: 13px; margin-left: 3px; border: 1px solid #5e7a8e; background: linear-gradient(135deg, #f0efe8, #fff); }

.work { flex: 1; min-width: 0; display: flex; flex-direction: column; }
.stage { flex: 1; min-height: 0; display: flex; }
.vtools { width: 26px; flex: none; display: flex; flex-direction: column; align-items: center; border-right: 1px solid #d8d5c4; overflow: hidden; }
.vgrip { flex: none; width: 18px; height: 2px; margin-top: 3px; background: repeating-linear-gradient(90deg, #9b9888 0 2px, transparent 2px 4px); }
.hr { flex: none; width: 23px; height: 1px; background: #cdcab8; }
.vt { writing-mode: vertical-rl; text-orientation: upright; line-height: 12px; font-size: 12px; flex: none; }
.vtri { flex: none; width: 0; height: 0; margin-top: 2px; border: 3px solid transparent; border-right: 3px solid currentColor; border-left: 0; }
.cad { display: block; flex: none; background: #000; }

.bl rect { fill: #b6cc6a; }
.pu { fill: #9200c8; }
.gl { stroke: #2b872b; fill: none; }
.rl { stroke: #cc1f1f; fill: none; }
.tk { stroke: #3b8a3b; stroke-width: .8; fill: none; }
.ax circle { fill: #000; stroke: #2a7d2a; }
.lb text { fill: #b8b8b8; font: 17px "Liberation Serif", serif; text-anchor: middle; }
.dm text { fill: #a9a9a9; font: 16px "Liberation Serif", serif; text-anchor: middle; }
.ya { fill: #1fe01f; }
.yl { fill: #7d9c7d; font: 12px "Liberation Sans", sans-serif; }

.dialog { position: absolute; left: 548px; top: 287px; width: 465px; height: 376px; display: flex; flex-direction: column; background: #7b97d8; border: 3px solid #7690d4; border-bottom-color: #4a56b4; border-radius: 7px 7px 0 0; }
.dlg-title { display: flex; align-items: center; justify-content: space-between; flex: none; height: 25px; padding: 0 3px 2px 3px; background: linear-gradient(#7d9ade, #87a4e2); color: #e4ecf8; font-size: 13px; font-weight: 700; letter-spacing: 1px; }
.dlg-name { margin-bottom: 2px; }
.dlg-close { position: relative; width: 19px; height: 19px; background: linear-gradient(135deg, #b67c9c, #c9607a); border: 1px solid #e8e4ec; border-radius: 3px; }
.dlg-close::before, .dlg-close::after { content: ""; position: absolute; left: 3px; top: 7.500px; width: 11px; height: 2.500px; background: #fff; transform: rotate(45deg); }
.dlg-close::after { transform: rotate(-45deg); }
.dlg-body { flex: 1; min-height: 0; display: flex; flex-direction: column; padding: 14px 12px 0 7px; background: #ece9d8; }
.dlg-cols { display: flex; gap: 23px; height: 227px; flex: none; }
.dlg-left { width: 177px; display: flex; flex-direction: column; gap: 12px; flex: none; }
.group { position: relative; border: 1px solid #d6d3c2; border-radius: 5px; }
.legend { position: absolute; top: -7px; left: 6px; padding: 0 1px; background: #ece9d8; color: #1c4f9c; line-height: 14px; white-space: nowrap; }
.g1 { height: 51px; }
.g2 { height: 51px; }
.g3 { flex: 1; }
.gr { width: 241px; flex: none; }
.opts { display: flex; align-items: center; padding: 20px 0 0 7px; }
.opt { display: flex; align-items: center; gap: 3px; }
.w84 { width: 83px; }
.w85 { width: 85px; }
.radio { display: block; position: relative; width: 14px; height: 14px; border: 1px solid #4e6a7c; border-radius: 50%; background: radial-gradient(#fff, #e6e6dc); }
.radio.on::after { content: ""; position: absolute; left: 3px; top: 3px; width: 6px; height: 6px; border-radius: 50%; background: #3fa53f; }
.cbx { display: block; position: relative; width: 13px; height: 13px; border: 1px solid #4e6a7c; background: #f8f8f2; }
.cbx.on::after { content: ""; position: absolute; left: 3px; top: 0; width: 5px; height: 9px; border-right: 2px solid #2f9b3a; border-bottom: 2px solid #2f9b3a; transform: rotate(40deg); }
.field { display: flex; align-items: center; justify-content: space-between; position: absolute; left: 5px; right: 3px; }
.f1 { top: 16px; } .f2 { top: 53px; }
.f1 .f-label { padding-top: 4px; }
.f2 .f-label { padding-bottom: 6px; }
.f3 { top: 141px; left: 6px; right: 6px; } .f4 { top: 177px; left: 6px; right: 6px; }
.f3 .f-label { padding-top: 4px; }
.f4 .f-label { padding-bottom: 4px; }
.f-label { white-space: nowrap; }
.combo.dis { background: #f6f5ee; color: #aaa89c; border-color: #c8c6b8; }
.combo.dis .arrow { background: #e4e2d6; }
.combo.dis .arrow::after { border-color: #a9a79a; }
.mat-box { position: absolute; left: 2px; top: 23px; width: 230px; height: 99px; background: #fff; border: 1px solid #8aa0b8; }
.mat { width: 208px; }
.mat thead th { height: 19px; border-top: 0; border-left: 0; }
.mat tbody tr { height: 19px; }
.mat th { text-align: center; font-size: 12px; }
.note { margin: 5px 0 0; font-size: 12px; line-height: 12px; white-space: nowrap; color: #222; }
.n2 { margin-top: 12px; }
.dlg-btns { display: flex; justify-content: flex-end; gap: 8px; margin-top: 12px; }
.pbtn { width: 73px; height: 23px; padding: 0; border: 1px solid #17445c; border-radius: 4px; background: linear-gradient(#fff, #f0eee2 70%, #dcd8c6); font: 12px "Noto Sans CJK SC", sans-serif; color: #111; }

.callout { position: absolute; background: #fff; color: #e0101e; font: 26px/27.300px "Liberation Serif", "Noto Sans CJK SC", serif; letter-spacing: 1.600px; white-space: nowrap; padding-left: 1px; }
.c1 { left: 304px; top: 214px; width: 216px; height: 148px; }
.c2 { left: 284px; top: 488px; width: 258px; height: 226px; padding-top: 26px; padding-left: 2px; }
.redbox { position: absolute; border: 3px solid #e00010; }
.r1 { left: 633px; top: 460px; width: 104px; height: 38px; }
.r2 { left: 634px; top: 505px; width: 102px; height: 34px; }
.arrows { position: absolute; left: 0; top: 0; pointer-events: none; }
.arrows path { stroke: #d81414; stroke-width: 3; fill: none; }
.arrows .head { fill: #d81414; stroke-width: 1; }
```
